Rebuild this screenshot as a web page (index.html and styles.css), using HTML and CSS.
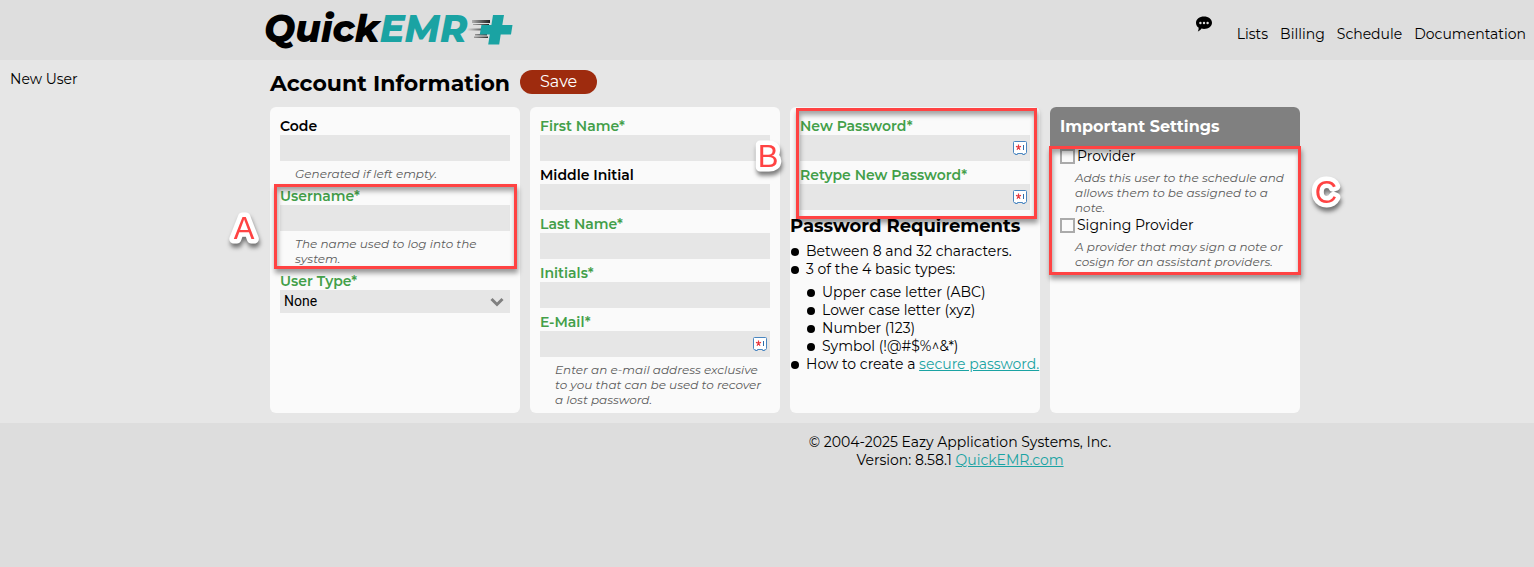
FILE: index.html
```html
<!DOCTYPE html>
<html lang="en">
<head>
    <meta charset="UTF-8">
    <meta name="viewport" content="width=device-width, initial-scale=1.0">
    <title>QuickEMR - New User</title>
    <link rel="stylesheet" href="styles.css">
</head>
<body>
    <svg width="0" height="0" class="sprite">
        <symbol id="safe" viewBox="0 0 14 14">
            <path d="M1.5 .5h11q1 0 1 1v10q0 1-1 1h-.7v1H9.6v-1H4.4v1H2.200v-1H1.500q-1 0-1-1v-10q0-1 1-1z" fill="#fff" stroke="#4a86c0"/>
            <path d="M5.500 3.500v2.800M3 5.400l2.500.9M8 5.400l-2.500.9M5.500 6.300L4 8.700M5.500 6.300L7 8.700" stroke="#e8363c" stroke-width="1.200"/>
            <path d="M10.500 4v5" stroke="#2f6ca8"/>
        </symbol>
    </svg>

    <header class="top">
        <a href="#" class="logo">
            <span class="quick">Quick</span><span class="emr">EMR</span>
            <svg class="plus" width="46" height="32" viewBox="0 0 46 32">
                <defs>
                    <linearGradient id="speed">
                        <stop offset="0" stop-color="#000" stop-opacity="0"/>
                        <stop offset="1" stop-color="#222"/>
                    </linearGradient>
                </defs>
                <path d="M5 6h18v3H5zM6 10h16v1H6zM0 14.500h15v2H0zM8 20h12v1.500H8zM7 22.500h14v1.500H7z" fill="url(#speed)"/>
                <path d="M26 1h11l-1.700 10H45.500L44 20.500H33.700L32.200 30.500h-11l1.600-10H12.800l1.600-9.500h10z" fill="#1aa3a3"/>
            </svg>
        </a>
        <nav class="menu">
            <a href="#" class="chat" aria-label="Messages">
                <svg width="16" height="16" viewBox="0 0 16 16">
                    <path d="M8 .5c4.500 0 8 2.700 8 6.200s-3.500 6.200-8 6.200c-.9 0-1.700-.1-2.500-.3C4.700 13.900 3.300 15 1.800 15.500c.7-1 1-2.500.7-3.900C.9 10.400 0 8.700 0 6.700 0 3.200 3.500.5 8 .5z"/>
                    <g fill="#dedede"><circle cx="4.400" cy="7" r="1.200"/><circle cx="8" cy="7" r="1.200"/><circle cx="11.600" cy="7" r="1.200"/></g>
                </svg>
            </a>
            <a href="#">Lists</a>
            <a href="#">Billing</a>
            <a href="#">Schedule</a>
            <a href="#">Documentation</a>
        </nav>
    </header>

    <div class="page">
        <aside class="side">New User</aside>
        <main class="content">
            <form>
                <div class="title">
                    <h1>Account Information</h1>
                    <button type="button" class="save">Save</button>
                </div>

                <div class="cards">
                    <section class="card">
                        <div class="field">
                            <label for="code">Code</label>
                            <input type="text" id="code">
                            <p class="hint">Generated if left empty.</p>
                        </div>
                        <div class="field">
                            <label for="username" class="required">Username*</label>
                            <input type="text" id="username">
                            <p class="hint">The name used to log into the system.</p>
                            <div class="mark mark-a"></div>
                            <svg class="letter letter-a" width="40" height="40"><text x="20" y="31">A</text></svg>
                        </div>
                        <div class="field">
                            <label for="type" class="required">User Type*</label>
                            <div class="control">
                                <select id="type">
                                    <option>None</option>
                                </select>
                                <svg class="arrow" width="14" height="10" viewBox="0 0 14 10">
                                    <path d="M1.500 2l5.500 5.500L12.500 2" fill="none" stroke="#808080" stroke-width="3"/>
                                </svg>
                            </div>
                        </div>
                    </section>

                    <section class="card">
                        <div class="field">
                            <label for="first" class="required">First Name*</label>
                            <input type="text" id="first">
                        </div>
                        <div class="field">
                            <label for="middle">Middle Initial</label>
                            <input type="text" id="middle">
                        </div>
                        <div class="field">
                            <label for="last" class="required">Last Name*</label>
                            <input type="text" id="last">
                        </div>
                        <div class="field">
                            <label for="initials" class="required">Initials*</label>
                            <input type="text" id="initials">
                        </div>
                        <div class="field">
                            <label for="email" class="required">E-Mail*</label>
                            <div class="control">
                                <input type="email" id="email">
                                <svg class="safe" width="14" height="14"><use href="#safe"/></svg>
                            </div>
                            <p class="hint">Enter an e-mail address exclusive to you that can be used to recover a lost password.</p>
                        </div>
                    </section>

                    <section class="card">
                        <div class="passwords">
                            <div class="field">
                                <label for="pass" class="required">New Password*</label>
                                <div class="control">
                                    <input type="password" id="pass">
                                    <svg class="safe" width="14" height="14"><use href="#safe"/></svg>
                                </div>
                            </div>
                            <div class="field">
                                <label for="pass2" class="required">Retype New Password*</label>
                                <div class="control">
                                    <input type="password" id="pass2">
                                    <svg class="safe" width="14" height="14"><use href="#safe"/></svg>
                                </div>
                            </div>
                            <div class="mark mark-b"></div>
                            <svg class="letter letter-b" width="40" height="40"><text x="20" y="31">B</text></svg>
                        </div>
                        <div class="rules">
                            <h2>Password Requirements</h2>
                            <ul>
                                <li>Between 8 and 32 characters.</li>
                                <li>3 of the 4 basic types:
                                    <ul>
                                        <li>Upper case letter (ABC)</li>
                                        <li>Lower case letter (xyz)</li>
                                        <li>Number (123)</li>
                                        <li>Symbol (!@#$%^&amp;*)</li>
                                    </ul>
                                </li>
                                <li>How to create a <a href="#">secure password.</a></li>
                            </ul>
                        </div>
                    </section>

                    <section class="card settings">
                        <h2>Important Settings</h2>
                        <div class="options">
                            <label class="check"><input type="checkbox">Provider</label>
                            <p class="hint">Adds this user to the schedule and allows them to be assigned to a note.</p>
                            <label class="check"><input type="checkbox">Signing Provider</label>
                            <p class="hint">A provider that may sign a note or cosign for an assistant providers.</p>
                            <div class="mark mark-c"></div>
                            <svg class="letter letter-c" width="40" height="40"><text x="20" y="31">C</text></svg>
                        </div>
                    </section>
                </div>
            </form>
        </main>
    </div>

    <footer>
        <p>© 2004-2025 Eazy Application Systems, Inc.</p>
        <p>Version: 8.58.1 <a href="#">QuickEMR.com</a></p>
    </footer>
</body>
</html>
```
FILE: styles.css
```css
* {
    box-sizing: border-box;
}

body {
    margin: 0;
    background-color: #dddddd;
    color: #000;
    font-family: Montserrat, Inter, sans-serif;
    font-size: 14px;
    line-height: 18px;
}

h1, h2, p, ul {
    margin: 0;
    padding: 0;
}

a {
    color: #1aa3a3;
}

.sprite {
    position: absolute;
}

/* header */
.top {
    display: flex;
    justify-content: space-between;
    height: 60px;
    padding: 0 8px 0 264px;
    background-color: #dedede;
}

.logo {
    display: flex;
    align-items: center;
    height: 58px;
    font-size: 37px;
    font-style: italic;
    font-weight: 800;
    text-decoration: none;
}

.quick {
    color: #000;
}

.emr {
    color: #1aa3a3;
}

.plus {
    margin-top: 2px;
}

.menu {
    display: flex;
    gap: 12px;
    padding-top: 25px;
}

.menu a {
    color: #000;
    text-decoration: none;
}

.menu .chat {
    margin: -9px 13px 0 0;
}

/* page */
.page {
    display: flex;
    padding: 10px 0;
    background-color: #e6e6e6;
}

.side {
    flex: 0 0 270px;
    padding-left: 10px;
}

.content {
    flex: 1;
}

.title {
    display: flex;
    gap: 10px;
    margin-bottom: 9px;
}

h1 {
    font-size: 22px;
    line-height: 28px;
}

.save {
    height: 24px;
    padding: 0 20px 1px;
    border: 0;
    border-radius: 12px;
    background-color: #9e2b0e;
    color: #fff;
    font-family: inherit;
    font-size: 16px;
}

.cards {
    display: grid;
    grid-template-columns: repeat(auto-fill, 250px);
    gap: 10px;
}

.card {
    padding: 10px 10px 0;
    border-radius: 6px;
    background-color: #fafafa;
}

.field, .passwords, .control, .options {
    position: relative;
}

.field {
    padding-bottom: 5px;
}

.field:has(.hint) {
    padding-bottom: 0;
}

.field label {
    display: block;
    font-weight: 600;
}

.field .required {
    color: #439f49;
}

.field input, select {
    display: block;
    width: 100%;
    height: 26px;
    padding: 0 4px;
    border: 0;
    background-color: #e6e6e6;
    font-family: Roboto, sans-serif;
    font-size: 14px;
}

select {
    height: 23px;
    padding-bottom: 1px;
    appearance: none;
}

.arrow, .safe {
    position: absolute;
    top: 6px;
    right: 3px;
    pointer-events: none;
}

.arrow {
    top: 7px;
    right: 6px;
}

.hint {
    padding: 5px 0 6px 15px;
    color: #5c5c5c;
    font-size: 12px;
    font-style: italic;
    line-height: 15px;
}

/* passwords */
.rules {
    margin: 0 -10px;
    white-space: nowrap;
}

h2 {
    font-size: 18px;
    line-height: 22px;
}

.rules > ul {
    margin-top: 5px;
}

.rules ul {
    list-style: none;
}

.rules ul ul {
    padding: 5px 0 0 16px;
}

.rules li::before {
    content: "";
    display: inline-block;
    width: 8px;
    height: 8px;
    margin: 0 7px 0 1px;
    border-radius: 50%;
    background-color: #000;
}

/* important settings */
.settings {
    padding-top: 0;
}

.settings h2 {
    margin: 0 -10px;
    padding: 0 10px;
    border-radius: 6px 6px 0 0;
    background-color: #808080;
    color: #fff;
    font-size: 16px;
    line-height: 40px;
}

.check {
    display: flex;
    align-items: center;
    gap: 2px;
}

.check input {
    width: 15px;
    height: 15px;
    margin: 0;
    border: 2px solid #aaa;
    background-color: #fafafa;
    appearance: none;
}

.options .hint {
    padding-bottom: 1px;
}

/* red marks over the form */
.mark {
    position: absolute;
    border: 3px solid #ff4343;
    box-shadow: 1px 4px 5px rgba(0, 0, 0, .4), inset 1px 4px 5px rgba(0, 0, 0, .35);
    pointer-events: none;
}

.mark-a {
    top: -3px;
    left: -6px;
    right: -7px;
    bottom: 3px;
}

.mark-b {
    top: -9px;
    left: -4px;
    right: -7px;
    bottom: -4px;
}

.mark-c {
    top: -1px;
    left: -11px;
    right: -11px;
    bottom: -5px;
}

.letter {
    position: absolute;
    overflow: visible;
    fill: #ff4343;
    stroke: #fff;
    stroke-width: 9px;
    stroke-linejoin: round;
    paint-order: stroke;
    text-anchor: middle;
    font-family: "Liberation Sans", sans-serif;
    font-size: 31px;
    filter: drop-shadow(1px 4px 2px rgba(0, 0, 0, .5));
    pointer-events: none;
}

.letter-a {
    top: 21px;
    left: -56px;
}

.letter-b {
    top: 19px;
    left: -52px;
}

.letter-c {
    top: 25px;
    right: -56px;
}

footer {
    padding: 10px 0 10px 386px;
    text-align: center;
}
```
